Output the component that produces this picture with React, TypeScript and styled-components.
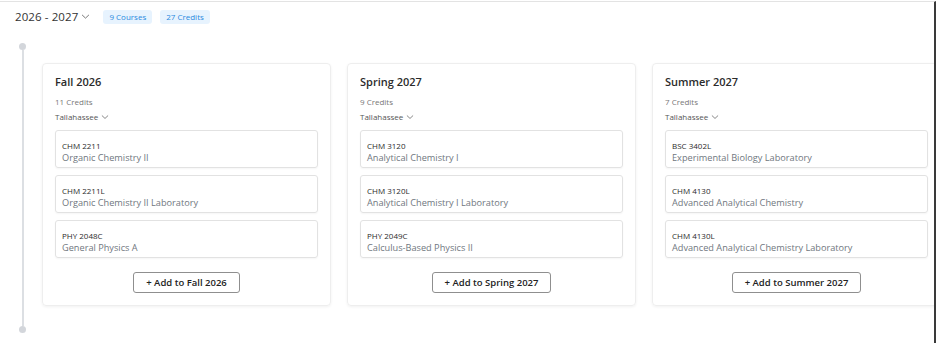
import React from "react";
import styled, { createGlobalStyle } from "styled-components";

type Course = { code: string; name: string };
type Term = { title: string; credits: number; campus: string; courses: Course[] };

const terms: Term[] = [
  {
    title: "Fall 2026",
    credits: 11,
    campus: "Tallahassee",
    courses: [
      { code: "CHM 2211", name: "Organic Chemistry II" },
      { code: "CHM 2211L", name: "Organic Chemistry II Laboratory" },
      { code: "PHY 2048C", name: "General Physics A" },
    ],
  },
  {
    title: "Spring 2027",
    credits: 9,
    campus: "Tallahassee",
    courses: [
      { code: "CHM 3120", name: "Analytical Chemistry I" },
      { code: "CHM 3120L", name: "Analytical Chemistry I Laboratory" },
      { code: "PHY 2049C", name: "Calculus-Based Physics II" },
    ],
  },
  {
    title: "Summer 2027",
    credits: 7,
    campus: "Tallahassee",
    courses: [
      { code: "BSC 3402L", name: "Experimental Biology Laboratory" },
      { code: "CHM 4130", name: "Advanced Analytical Chemistry" },
      { code: "CHM 4130L", name: "Advanced Analytical Chemistry Laboratory" },
    ],
  },
];

const Chevron = ({ size = 8 }: { size?: number }) => (
  <svg width={size} height={size} viewBox="0 0 10 10" fill="none">
    <path d="M1.5 3.5 L5 6.8 L8.5 3.5" stroke="#777" strokeWidth="1.1" strokeLinecap="round" strokeLinejoin="round" />
  </svg>
);

export default function App() {
  return (
    <>
      <GlobalStyle />
      <Frame>
        <Header>
          <YearPicker>
            <Year>2026 - 2027</Year>
            <Chevron size={9} />
          </YearPicker>
          <Badge>9 Courses</Badge>
          <Badge>27 Credits</Badge>
        </Header>
        <Body>
          <Rail>
            <Dot />
            <Line />
            <Dot />
          </Rail>
          <Cards>
            {terms.map((term) => (
              <Card key={term.title}>
                <Title>{term.title}</Title>
                <Meta>{term.credits} Credits</Meta>
                <Campus>
                  {term.campus}
                  <Chevron size={8} />
                </Campus>
                <CourseList>
                  {term.courses.map((c) => (
                    <CourseItem key={c.code}>
                      <Code>{c.code}</Code>
                      <Name>{c.name}</Name>
                    </CourseItem>
                  ))}
                </CourseList>
                <AddButton>+ Add to {term.title}</AddButton>
              </Card>
            ))}
          </Cards>
        </Body>
      </Frame>
    </>
  );
}

const GlobalStyle = createGlobalStyle`
  html, body {
    margin: 0;
    padding: 0;
    background: #fff;
  }
  body {
    font-family: "Open Sans", "Noto Sans", sans-serif;
    color: #2b2b2b;
  }
`;

const Frame = styled.div`
  width: 936px;
  height: 343px;
  box-sizing: border-box;
  margin-top: 1px;
  border-top: 1px solid #e3e3e3;
  border-right: 2px solid #3a3a3a;
  overflow: hidden;
  background: #fff;
`;

const Header = styled.div`
  display: flex;
  align-items: center;
  gap: 8px;
  padding: 6px 0 0 15px;
  height: 17px;
`;

const YearPicker = styled.div`
  display: flex;
  align-items: center;
  gap: 3px;
  margin-right: 5px;
`;

const Year = styled.span`
  font-size: 11.5px;
  color: #333;
  letter-spacing: 0.1px;
`;

const Badge = styled.span`
  background: #e7f3fe;
  color: #2a8ae0;
  font-size: 8px;
  line-height: 14px;
  padding: 0 6px;
  border-radius: 3px;
`;

const Body = styled.div`
  display: flex;
  padding-top: 18px;
`;

const Rail = styled.div`
  width: 8px;
  margin-left: 19px;
  display: flex;
  flex-direction: column;
  align-items: center;
  height: 290px;
`;

const Dot = styled.div`
  width: 7px;
  height: 7px;
  border-radius: 50%;
  background: #d3d6db;
  flex: none;
`;

const Line = styled.div`
  width: 2px;
  flex: 1;
  background: #dcdfe3;
`;

const Cards = styled.div`
  display: flex;
  gap: 16px;
  margin-left: 16px;
  padding-top: 20px;
`;

const Card = styled.div`
  width: 289px;
  flex: none;
  box-sizing: border-box;
  height: 243px;
  padding: 10px 12px 12px;
  border: 1px solid #eeeeee;
  border-radius: 4px;
  box-shadow: 0 1px 3px rgba(0, 0, 0, 0.06);
  display: flex;
  flex-direction: column;
`;

const Title = styled.div`
  font-size: 11px;
  font-weight: 600;
  color: #2b2b2b;
  line-height: 16px;
`;

const Meta = styled.div`
  font-size: 8px;
  color: #777;
  margin-top: 6px;
  line-height: 11px;
`;

const Campus = styled.div`
  display: flex;
  align-items: center;
  gap: 3px;
  font-size: 8px;
  color: #555;
  margin-top: 4px;
  line-height: 11px;
`;

const CourseList = styled.div`
  display: flex;
  flex-direction: column;
  gap: 7px;
  margin-top: 8px;
`;

const CourseItem = styled.div`
  height: 38px;
  box-sizing: border-box;
  padding: 9px 6px 0;
  border: 1px solid #e2e2e2;
  border-radius: 3px;
  box-shadow: 0 1px 2px rgba(0, 0, 0, 0.04);
`;

const Code = styled.div`
  font-size: 8px;
  line-height: 11px;
  font-weight: 500;
  color: #2b2b2b;
`;

const Name = styled.div`
  font-size: 9.2px;
  line-height: 13px;
  color: #707780;
`;

const AddButton = styled.button`
  align-self: center;
  margin-top: 14px;
  height: 23px;
  padding: 0 12px;
  background: #fff;
  border: 1px solid #8f8f8f;
  border-radius: 3px;
  font-family: inherit;
  font-size: 9.5px;
  font-weight: 600;
  color: #222;
  cursor: pointer;
`;
